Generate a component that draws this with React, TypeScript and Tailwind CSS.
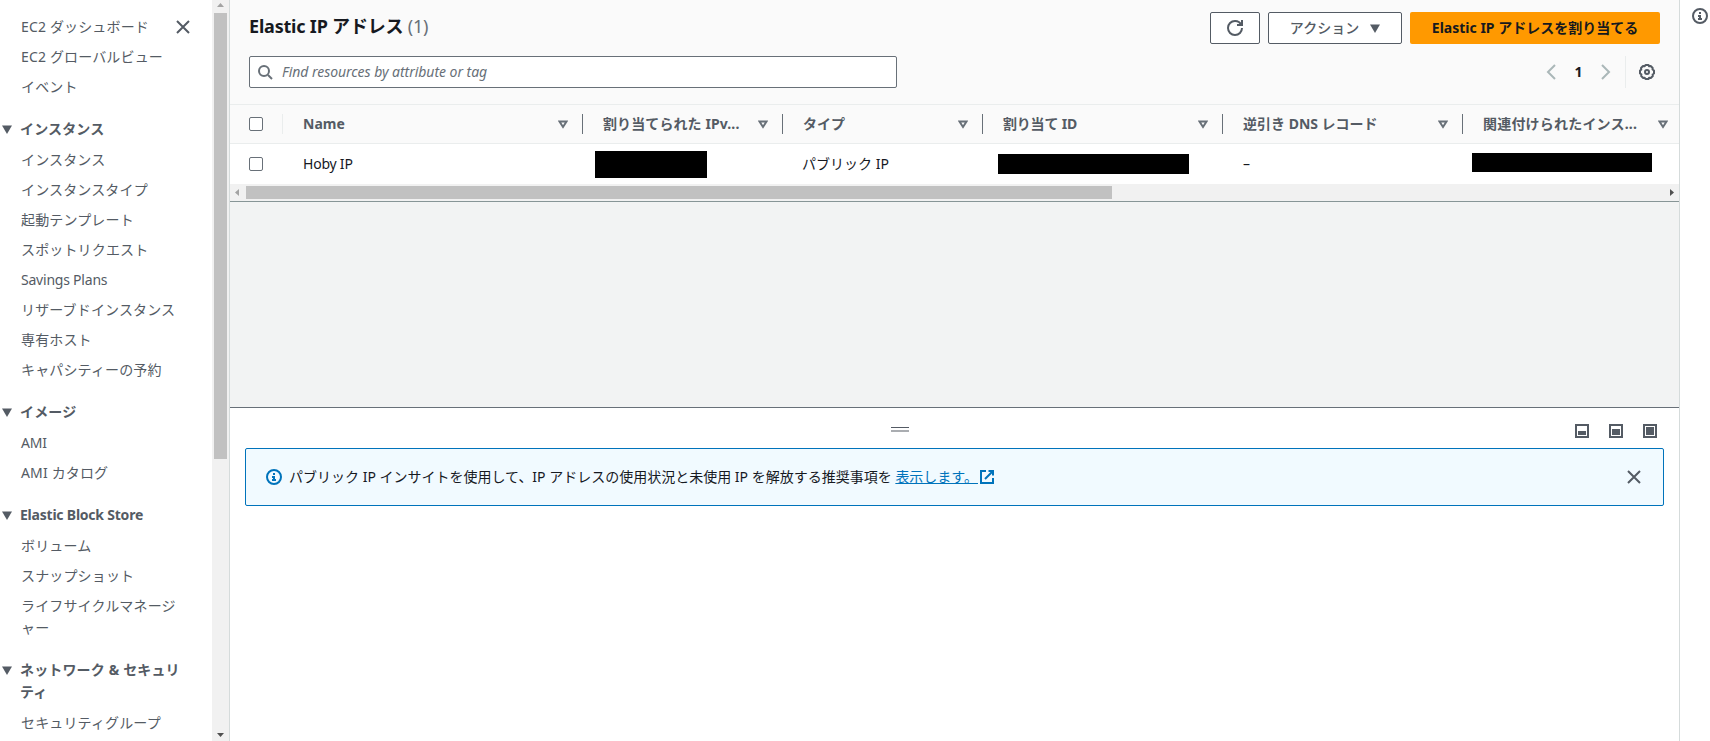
import { useState } from "react";
import type { ReactNode } from "react";

type NavSection = {
    title?: string,
    items: string[],
}

type Column = {
    label: string,
    width: string,
    tracking: string,
}

const sections: NavSection[] = [
    { items: ["EC2 ダッシュボード", "EC2 グローバルビュー", "イベント"] },
    {
        title: "インスタンス",
        items: ["インスタンス", "インスタンスタイプ", "起動テンプレート", "スポットリクエスト", "Savings Plans", "リザーブドインスタンス", "専有ホスト", "キャパシティーの予約"],
    },
    { title: "イメージ", items: ["AMI", "AMI カタログ"] },
    { title: "Elastic Block Store", items: ["ボリューム", "スナップショット", "ライフサイクルマネージャー"] },
    { title: "ネットワーク & セキュリティ", items: ["セキュリティグループ"] },
]

const columns: Column[] = [
    { label: "Name", width: "w-[300px]", tracking: "tracking-normal" },
    { label: "割り当てられた IPv...", width: "w-[200px]", tracking: "tracking-[0.1px]" },
    { label: "タイプ", width: "w-[200px]", tracking: "tracking-normal" },
    { label: "割り当て ID", width: "w-[240px]", tracking: "tracking-[-0.2px]" },
    { label: "逆引き DNS レコード", width: "w-[240px]", tracking: "tracking-normal" },
    { label: "関連付けられたインス...", width: "w-[216px]", tracking: "tracking-[0.2px]" },
]

// latin-only labels run slightly tighter than the japanese ones
const labelTracking = (text: string) => /^[\x20-\x7e]+$/.test(text) ? "tracking-[-0.22px]" : "tracking-[0.15px]"

const CloseIcon = () => <svg width="16" height="16" viewBox="0 0 16 16" fill="none" stroke="#545b64" strokeWidth="2">
    <path d="M2 2l12 12M14 2L2 14" />
</svg>

const InfoIcon = ({ color }: { color: string }) => <svg className="shrink-0" width="16" height="16" viewBox="0 0 16 16" fill="none" stroke={color} strokeWidth="2">
    <circle cx="8" cy="8" r="7" />
    <path d="M8 12V8H6M10 11H6M8 6V4" />
</svg>

const Caret = () => <svg className="shrink-0" width="10" height="9" viewBox="0 0 10 9">
    <path d="M0 0.5h10L5 9z" fill="#545b64" />
</svg>

const SortIcon = () => <svg className="shrink-0" width="10" height="9" viewBox="0 0 10 9" fill="none" stroke="#687078" strokeWidth="2">
    <path d="M1.5 1.5h7L5 7z" />
</svg>

// 17px scrollbar arrows
const Arrow = ({ d, color }: { d: string, color: string }) => <svg className="shrink-0" width="17" height="17" viewBox="0 0 17 17">
    <path d={d} fill={color} />
</svg>

const PanelIcon = ({ top, height }: { top: number, height: number }) => <svg width="14" height="14" viewBox="0 0 14 14">
    <rect x="1" y="1" width="12" height="12" fill="none" stroke="#545b64" strokeWidth="2" />
    <rect x="3" y={top} width="8" height={height} fill="#545b64" />
</svg>

const Checkbox = ({ checked, onClick }: { checked: boolean, onClick: () => void }) => {
    return <button role="checkbox" aria-checked={checked} onClick={onClick}
        className={`${checked ? "bg-[#0073bb]" : "bg-white"} block size-[14px] shrink-0 rounded-[2px] border border-[#687078]`} />
}

function Sidebar() {
    return <nav className="flex h-full w-[230px] shrink-0 border-r border-[#d5dbdb] bg-white text-[#545b64]">
        <div className="flex w-[212px] shrink-0 flex-col gap-5 overflow-hidden pt-4">
            {sections.map((section, i) => {
                return <div key={i} className="shrink-0">
                    {section.title && <div className={`${labelTracking(section.title)} mb-[9px] flex pl-[2px] font-bold leading-[22px]`}>
                        <div className="mt-[7px] w-[18px] shrink-0"><Caret /></div>
                        <div className="w-[160px] break-all">{section.title}</div>
                    </div>}
                    <div className="flex">
                        <ul className="flex w-[176px] flex-col gap-2 pl-[21px] leading-[22px]">
                            {section.items.map((item) => <li key={item} className={`${labelTracking(item)} -mr-2`}>
                                <a href="#" className="block">{item}</a>
                            </li>)}
                        </ul>
                        {i === 0 && <button className="h-4 mt-[3px] -ml-px"><CloseIcon /></button>}
                    </div>
                </div>
            })}
        </div>
        <div className="flex w-[17px] shrink-0 flex-col bg-[#f1f1f1]">
            <div className="h-[13px] overflow-hidden"><Arrow d="M5 7h7L8.500 3z" color="#a3a3a3" /></div>
            <div className="mx-0.5 h-[446px] bg-[#c1c1c1]" />
            <div className="mt-auto h-4"><Arrow d="M5 8h7L8.500 12z" color="#505050" /></div>
        </div>
    </nav>
}

function Toolbar() {
    return <div className="h-[104px] bg-[#fafafa] pl-[19px] pr-[19px] pt-3">
        <div className="flex h-8 items-center gap-2">
            <h1 className="mr-auto -mt-1 text-[18px] font-bold tracking-[-0.2px] text-[#16191f]">
                Elastic IP アドレス <span className="font-normal text-[#687078]">(1)</span>
            </h1>
            <button className="flex h-8 w-[50px] items-center justify-center rounded-[2px] border border-[#545b64] bg-white">
                <svg width="16" height="16" viewBox="0 0 16 16" fill="none" stroke="#545b64" strokeWidth="2">
                    <path d="M10 5h5V0" />
                    <path d="M15 8a6.960 6.960 0 0 1-7 7 6.960 6.960 0 0 1-7-7 6.960 6.960 0 0 1 7-7 6.870 6.870 0 0 1 6.300 4" />
                </svg>
            </button>
            <button className="flex h-8 w-[134px] items-center justify-center gap-[11px] rounded-[2px] border border-[#545b64] bg-white font-medium text-[#545b64]">
                アクション <Caret />
            </button>
            <button className="h-8 w-[250px] rounded-[2px] bg-[#ff9900] font-bold text-[#16191f] whitespace-nowrap">Elastic IP アドレスを割り当てる</button>
        </div>
        <div className="mt-3 flex h-8 items-center">
            <div className="flex h-8 w-[648px] items-center gap-[9px] rounded-[2px] border border-[#687078] bg-white pl-[7px]">
                <svg width="16" height="16" viewBox="0 0 16 16" fill="none" stroke="#687078" strokeWidth="2">
                    <circle cx="7" cy="7" r="5" />
                    <path d="M11 11l4 4" />
                </svg>
                <input className="grow italic tracking-[-0.04px] outline-none placeholder:text-[#687078]" placeholder="Find resources by attribute or tag" />
            </div>
            <div className="ml-auto flex h-8 items-center">
                <svg width="16" height="16" viewBox="0 0 16 16" fill="none" stroke="#aab7b8" strokeWidth="2"><path d="M12 1L5 8l7 7" /></svg>
                <div className="w-[39px] text-center font-bold text-[#16191f]">1</div>
                <svg width="16" height="16" viewBox="0 0 16 16" fill="none" stroke="#aab7b8" strokeWidth="2"><path d="M4 1l7 7-7 7" /></svg>
                <div className="ml-[11px] h-8 w-px bg-[#eaeded]" />
                <svg className="ml-[13px] mr-[5px]" width="16" height="16" viewBox="0 0 16 16" fill="none" stroke="#545b64" strokeWidth="2" strokeLinejoin="round">
                    <path d="M6.500 1h3l.6 1.300 1.600-.3 2 2-.2 1.500L15 6.500v3l-1.400.8.2 1.700-2 2-1.700-.3-.6 1.300h-3l-.8-1.300-1.500.3-2-2 .2-1.600L1 9.500v-3l1.300-.8L2 4l2-2 1.700.3z" />
                    <circle cx="8" cy="8" r="2" />
                </svg>
            </div>
        </div>
    </div>
}

const Cell = ({ width, children }: { width: string, children?: ReactNode }) => {
    return <div className={`${width} flex shrink-0 items-center`}>{children}</div>
}

function AddressTable() {
    const [selected, setSelected] = useState<boolean>(false)

    return <div>
        <div className="flex h-10 border-y border-[#eaeded] bg-[#fafafa] font-bold text-[#545b64]">
            <div className="flex w-[53px] shrink-0 items-center pl-[19px]">
                <Checkbox checked={selected} onClick={() => setSelected(!selected)} />
                <div className="ml-auto h-5 w-px bg-[#eaeded]" />
            </div>
            {columns.map((column, i) => {
                return <div key={column.label} className={`${column.width} flex shrink-0 items-center pl-5`}>
                    <span className={`${column.tracking} grow whitespace-nowrap`}>{column.label}</span>
                    <SortIcon />
                    {i < columns.length - 1 ? <div className="ml-[14px] h-5 w-px bg-[#687078]" /> : <div className="w-[11px]" />}
                </div>
            })}
        </div>
        <div className="flex h-10 bg-white text-[#16191f]">
            <div className="flex w-[53px] shrink-0 items-center pl-[19px]">
                <Checkbox checked={selected} onClick={() => setSelected(!selected)} />
            </div>
            <Cell width="w-[300px]"><span className="pl-5 tracking-[-0.22px]">Hoby IP</span></Cell>
            <Cell width="w-[200px]"><div className="ml-3 mt-[1px] h-[27px] w-[112px] bg-black" /></Cell>
            <Cell width="w-[200px]"><span className="pl-5 -ml-px">パブリック IP</span></Cell>
            <Cell width="w-[240px]"><div className="ml-[15px] h-5 w-[191px] bg-black" /></Cell>
            <Cell width="w-[240px]"><span className="pl-5">–</span></Cell>
            <Cell width="w-[216px]"><div className="-mt-[3px] ml-[9px] h-[19px] w-[180px] bg-black" /></Cell>
        </div>
        <div className="flex h-[17px] bg-[#f1f1f1]">
            <div className="w-4 overflow-hidden"><Arrow d="M9 5v7L5 8.500z" color="#a3a3a3" /></div>
            <div className="my-0.5 w-[866px] bg-[#c1c1c1]" />
            <div className="ml-auto"><Arrow d="M8 5v7l4-3.500z" color="#505050" /></div>
        </div>
    </div>
}

function SplitPanel() {
    const [showAlert, setShowAlert] = useState<boolean>(true)

    return <section className="h-[334px] shrink-0 border-t border-[#687078] bg-white px-[15px]">
        <div className="flex h-10 items-start justify-between">
            <div className="ml-[646px] mt-[19px] flex w-[18px] flex-col gap-[2px]">
                <div className="h-px bg-[#545b64]" />
                <div className="h-[2px] bg-[#aaadb1]" />
            </div>
            <div className="mt-4 flex gap-5 pr-[7px]">
                <PanelIcon top={7} height={4} />
                <PanelIcon top={5} height={6} />
                <PanelIcon top={3} height={8} />
            </div>
        </div>
        {showAlert && <div className="flex h-[58px] items-center rounded-[2px] border border-[#0073bb] bg-[#f1faff] pl-5 pr-[21px] text-[#16191f]">
            <InfoIcon color="#0073bb" />
            <p className="ml-[7px] whitespace-nowrap">
                パブリック IP インサイトを使用して、IP アドレスの使用状況と未使用 IP を解放する推奨事項を <a href="#" className="text-[#0073bb] underline">表示します。</a>
            </p>
            <svg className="ml-0.5" width="14" height="14" viewBox="0 0 14 14" fill="none" stroke="#0073bb" strokeWidth="2">
                <path d="M6 1H1v12h12V8" />
                <path d="M8.500 1H13v4.500M13 1L5 9" />
            </svg>
            <button className="ml-auto" onClick={() => setShowAlert(false)}><CloseIcon /></button>
        </div>}
    </section>
}

export default function App() {
    return <div className="flex h-[741px] w-[1710px] overflow-hidden bg-white font-['Noto_Sans','Noto_Sans_CJK_JP',sans-serif] text-[14px] leading-[22px]">
        <Sidebar />
        <main className="flex h-full w-[1450px] shrink-0 flex-col border-r border-[#d5dbdb] bg-[#f2f3f3]">
            <Toolbar />
            <AddressTable />
            <div className="grow border-t border-[#879596]" />
            <SplitPanel />
        </main>
        <aside className="flex grow justify-end bg-white pr-[2px] pt-2">
            <InfoIcon color="#545b64" />
        </aside>
    </div>
}
